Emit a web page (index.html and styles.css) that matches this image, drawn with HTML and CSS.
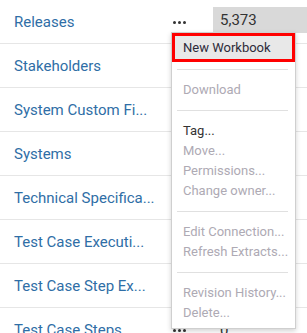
FILE: index.html
```html
<!DOCTYPE html>
<html lang="en">
<head>
  <meta charset="UTF-8">
  <meta name="viewport" content="width=device-width, initial-scale=1.0">
  <title>Data Sources</title>
  <link rel="stylesheet" href="styles.css">
</head>
<body>
  <div class="list">
    <div class="row">
      <a class="name" href="#">Releases</a>
      <span class="more"><i></i><i></i><i></i></span>
      <span class="count hover">5,373</span>
    </div>
    <div class="row">
      <a class="name" href="#">Stakeholders</a>
      <span class="more"><i></i><i></i><i></i></span>
      <span class="count"></span>
    </div>
    <div class="row">
      <a class="name" href="#">System Custom Fi...</a>
      <span class="more"><i></i><i></i><i></i></span>
      <span class="count"></span>
    </div>
    <div class="row">
      <a class="name" href="#">Systems</a>
      <span class="more"><i></i><i></i><i></i></span>
      <span class="count"></span>
    </div>
    <div class="row">
      <a class="name" href="#">Technical Specifica...</a>
      <span class="more"><i></i><i></i><i></i></span>
      <span class="count"></span>
    </div>
    <div class="row">
      <a class="name" href="#">Test Case Executi...</a>
      <span class="more"><i></i><i></i><i></i></span>
      <span class="count"></span>
    </div>
    <div class="row">
      <a class="name" href="#">Test Case Step Ex...</a>
      <span class="more"><i></i><i></i><i></i></span>
      <span class="count"></span>
    </div>
    <div class="row">
      <a class="name" href="#">Test Case Steps</a>
      <span class="more"><i></i><i></i><i></i></span>
      <span class="count">0</span>
    </div>
  </div>

  <!-- context menu for the Releases row -->
  <div class="menu">
    <div class="item active marked">New Workbook</div>
    <div class="sep"></div>
    <div class="item disabled">Download</div>
    <div class="sep"></div>
    <div class="item">Tag...</div>
    <div class="item disabled">Move...</div>
    <div class="item disabled">Permissions...</div>
    <div class="item disabled">Change owner...</div>
    <div class="sep"></div>
    <div class="item disabled">Edit Connection...</div>
    <div class="item disabled">Refresh Extracts...</div>
    <div class="sep"></div>
    <div class="item disabled">Revision History...</div>
    <div class="item disabled">Delete...</div>
  </div>
</body>
</html>
```

FILE: styles.css
```css
body {
  font-family: Roboto, "Liberation Sans", Arial, sans-serif;
  background-color: #fff;
  margin: 0;
  padding: 0;
  overflow: hidden;
}
.list {
  width: 307px;
}
.row {
  display: flex;
  align-items: center;
  height: 43px;
  border-bottom: 1px solid #e6e6e6;
}
.name {
  width: 159px;
  padding-left: 14px;
  color: #2f6ea6;
  font-size: 15px;
  text-decoration: none;
  white-space: nowrap;
  overflow: hidden;
}
.more {
  display: flex;
  gap: 2px;
  width: 13px;
  margin-top: 2px;
}
.more i {
  width: 3px;
  height: 3px;
  border-radius: 50%;
  background-color: #333;
}
.count {
  display: flex;
  align-items: center;
  margin-left: 27px;
  padding-left: 7px;
  height: 26px;
  flex: 1;
  font-size: 15px;
  color: #333;
}
.count.hover {
  background-color: #d9d9d9;
  margin-top: -3px;
}
.menu {
  position: absolute;
  left: 171px;
  top: 32px;
  width: 123px;
  padding: 3px 0 5px;
  background-color: #fff;
  border: 1px solid #cfcfcf;
  box-shadow: 0 2px 5px rgba(0, 0, 0, 0.18);
  font-size: 13px;
}
.item {
  height: 20px;
  line-height: 20px;
  margin: 0 3px;
  padding-left: 8px;
  color: #333;
  white-space: nowrap;
}
.item.disabled {
  color: #aeaab4;
}
.item.active {
  height: 23px;
  line-height: 23px;
  background-color: #e8e8e8;
  color: #2d2b3a;
}
.item.marked {
  outline: 3px solid #f00;
}
.sep {
  height: 1px;
  margin: 10px 7px 10px 5px;
  background-color: #e0e0e0;
}
```
